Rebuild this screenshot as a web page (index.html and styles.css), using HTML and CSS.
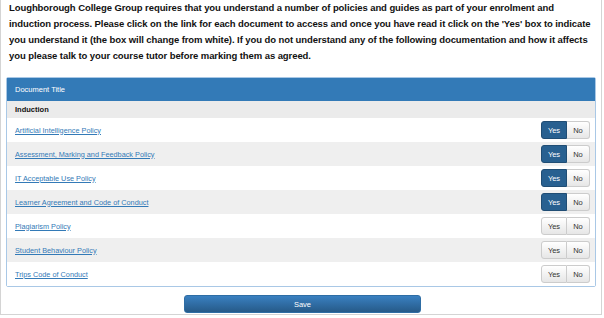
FILE: index.html
```html
<!DOCTYPE html>
<html lang="en">
<head>
    <meta charset="UTF-8">
    <title>Policies and Guides</title>
    <link rel="stylesheet" href="styles.css">
</head>
<body>
<div class="frame">
    <p class="intro">Loughborough College Group requires that you understand a number of policies and guides as part of your enrolment and<br>induction process. Please click on the link for each document to access and once you have read it click on the 'Yes' box to indicate<br>you understand it (the box will change from white). If you do not understand any of the following documentation and how it affects<br>you please talk to your course tutor before marking them as agreed.</p>
    <div class="panel">
        <div class="panel-head">Document Title</div>
        <div class="group-row">Induction</div>
        <div class="doc-row">
            <a href="#">Artificial Intelligence Policy</a>
            <div class="toggle"><span class="yes on">Yes</span><span class="no">No</span></div>
        </div>
        <div class="doc-row alt">
            <a href="#">Assessment, Marking and Feedback Policy</a>
            <div class="toggle"><span class="yes on">Yes</span><span class="no">No</span></div>
        </div>
        <div class="doc-row">
            <a href="#">IT Acceptable Use Policy</a>
            <div class="toggle"><span class="yes on">Yes</span><span class="no">No</span></div>
        </div>
        <div class="doc-row alt">
            <a href="#">Learner Agreement and Code of Conduct</a>
            <div class="toggle"><span class="yes on">Yes</span><span class="no">No</span></div>
        </div>
        <div class="doc-row">
            <a href="#">Plagiarism Policy</a>
            <div class="toggle"><span class="yes">Yes</span><span class="no">No</span></div>
        </div>
        <div class="doc-row alt">
            <a href="#">Student Behaviour Policy</a>
            <div class="toggle"><span class="yes">Yes</span><span class="no">No</span></div>
        </div>
        <div class="doc-row">
            <a href="#">Trips Code of Conduct</a>
            <div class="toggle"><span class="yes">Yes</span><span class="no">No</span></div>
        </div>
    </div>
    <div class="actions">
        <button class="save">Save</button>
    </div>
</div>
</body>
</html>
```
FILE: styles.css
```css
body{
    margin: 0;
    font-family: "Liberation Sans", Arial, sans-serif;
    color: #222;
}
.frame{
    width: 600px;
    height: 314px;
    border: 1px solid #d4d4d4;
    border-top: none;
    background: #fff;
    overflow: hidden;
}
.intro{
    margin: 0;
    padding: 0 0 0 8px;
    font-size: 9.5px;
    font-weight: bold;
    line-height: 16px;
    color: #111;
    white-space: nowrap;
    letter-spacing: -0.08px;
}
.panel{
    margin: 13px 5px 0 5px;
    border: 1px solid #a9c8e6;
    border-radius: 2px;
}
.panel-head{
    background: #337ab7;
    color: #fff;
    font-size: 7.5px;
    height: 23px;
    line-height: 23px;
    padding-left: 8px;
}
.group-row{
    background: #ebebeb;
    font-size: 7.5px;
    font-weight: bold;
    height: 17px;
    line-height: 17px;
    padding-left: 8px;
    color: #111;
}
.doc-row{
    display: flex;
    justify-content: space-between;
    align-items: center;
    height: 24px;
    padding: 0 5px 0 8px;
    background: #fff;
}
.doc-row.alt{
    background: #efefef;
}
.doc-row a{
    font-size: 7.3px;
    color: #337ab7;
    text-decoration: underline;
}
.toggle{
    display: flex;
    height: 18px;
    font-size: 7.5px;
}
.toggle span{
    display: flex;
    align-items: center;
    justify-content: center;
    border: 1px solid #ccc;
    background: linear-gradient(#fff, #e6e6e6);
    color: #333;
}
.toggle .yes{
    width: 24px;
    border-radius: 3px 0 0 3px;
}
.toggle .no{
    width: 22px;
    border-left: none;
    border-radius: 0 3px 3px 0;
}
.toggle .yes.on{
    background: #286090;
    border-color: #204d74;
    color: #fff;
}
.actions{
    display: flex;
    justify-content: center;
    padding-top: 8px;
}
.save{
    width: 237px;
    height: 18px;
    border: 1px solid #2e6da4;
    border-radius: 3px;
    background: linear-gradient(#3a80c0, #265a88);
    color: #fff;
    font-family: "Liberation Sans", Arial, sans-serif;
    font-size: 7.5px;
    padding: 0;
    margin-left: 3px;
}
```
